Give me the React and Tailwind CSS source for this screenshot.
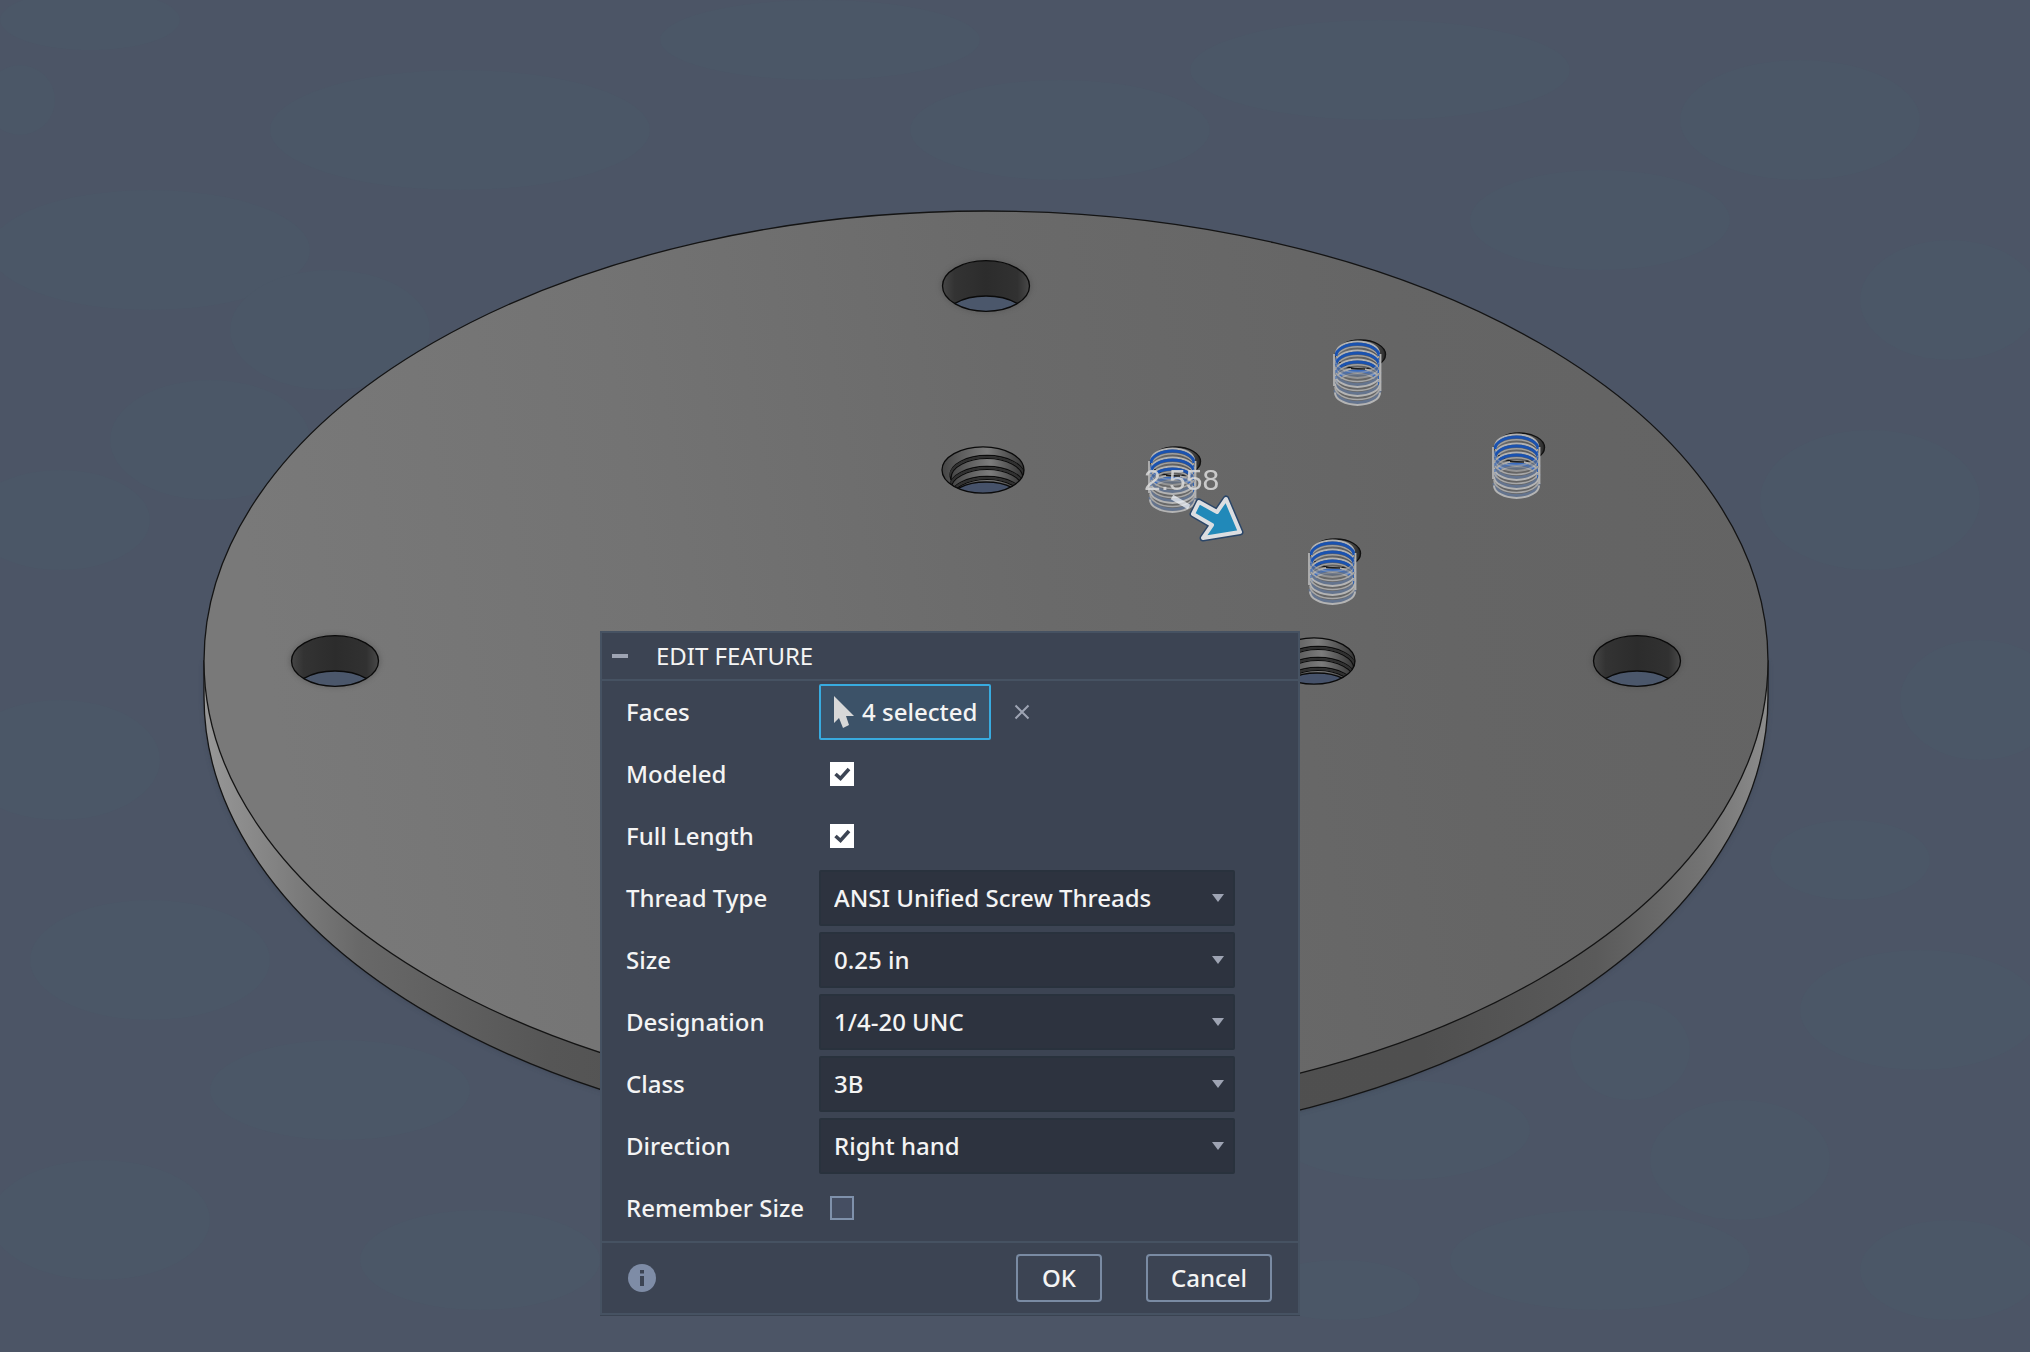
import React, { useState } from 'react';

const selects = [
  { id: 'threadType', label: 'Thread Type', options: ['ANSI Unified Screw Threads', 'ANSI Metric M Profile', 'ISO Metric Profile'] },
  { id: 'size', label: 'Size', options: ['0.25 in', '0.3125 in', '0.375 in'] },
  { id: 'designation', label: 'Designation', options: ['1/4-20 UNC', '1/4-28 UNF', '1/4-32 UNEF'] },
  { id: 'threadClass', label: 'Class', options: ['3B', '2B', '1B'] },
  { id: 'direction', label: 'Direction', options: ['Right hand', 'Left hand'] },
];

const boltHoles = [[986, 286], [335, 661], [1637, 661]];
const tappedHoles = [[983, 470], [1314, 661]];
const springs = [[1333, 341], [1148, 448], [1308, 540], [1492, 434]];

const smudges = [
  [90, 20, 90, 30], [20, 100, 35, 35], [150, 250, 160, 60], [460, 130, 190, 60], [330, 330, 100, 60],
  [210, 440, 100, 60], [60, 520, 90, 50], [820, 40, 160, 40], [1060, 130, 150, 50], [1380, 70, 190, 50],
  [1600, 220, 130, 50], [1800, 120, 120, 60], [1950, 300, 90, 60], [1870, 500, 110, 70], [1980, 700, 80, 60],
  [60, 760, 100, 60], [150, 960, 120, 60], [340, 1090, 130, 50], [100, 1220, 110, 60], [480, 1260, 120, 50],
  [1400, 1130, 130, 50], [1630, 1050, 60, 50], [1600, 1260, 150, 50], [1740, 1160, 90, 60], [1920, 1010, 120, 60],
  [1850, 860, 80, 40], [1340, 1290, 80, 30], [1950, 1270, 90, 50],
];

function BoltHole({ x, y }) {
  return (
    <g transform={`translate(${x} ${y})`}>
      <ellipse rx="46" ry="27" fill="#444" opacity="0.35" filter="url(#soft)" />
      <g clipPath="url(#boltClip)">
        <rect x="-45" y="-27" width="90" height="54" fill="url(#boltWall)" />
        <ellipse cy="35" rx="44" ry="25" fill="#4b576b" stroke="#0a0a0a" strokeWidth="1.3" />
      </g>
      <ellipse rx="43.5" ry="25.3" fill="none" stroke="#0a0a0a" strokeWidth="1.3" />
    </g>
  );
}

function TappedHole({ x, y }) {
  return (
    <g transform={`translate(${x} ${y})`}>
      <g clipPath="url(#tapClip)">
        <rect x="-42" y="-24" width="84" height="48" fill="url(#tapWall)" />
        {[5, 16, 26].map(cy => (
          <g key={cy}>
            <ellipse cx="4" cy={cy} rx="37" ry="19.5" fill="url(#tapWall)" stroke="#0c0c0c" strokeWidth="1.3" />
            <path d={`M-33 ${cy + 1.5}A37 19.5 0 0 1 41 ${cy + 1.5}`} fill="none" stroke="#303030" strokeWidth="2" />
            <ellipse cx="4" cy={cy + 3} rx="36" ry="19.5" fill="none" stroke="#0c0c0c" strokeWidth="1.2" />
          </g>
        ))}
        <ellipse cx="3" cy="31" rx="37" ry="19" fill="#46526a" stroke="#0a0a0a" strokeWidth="1.3" />
      </g>
      <ellipse rx="41" ry="23.2" fill="none" stroke="#0a0a0a" strokeWidth="1.3" />
    </g>
  );
}

function Spring({ x, y }) {
  const back = cy => `M3 ${cy}A21.5 12 0 0 1 46 ${cy}`;
  const front = cy => `M2 ${cy}A22.5 12.5 0 0 0 47 ${cy}`;
  return (
    <g transform={`translate(${x} ${y})`} fill="none">
      <ellipse cx="27.5" cy="13.5" rx="25" ry="14.5" fill="url(#pilot)" stroke="#111" strokeWidth="1.4" />
      {[15, 24, 33, 42].map((cy, i) => (
        <g key={cy}>
          <path d={back(cy - 2.6)} stroke="#b2b2b2" strokeWidth="2" />
          <path d={back(cy + 2.8)} stroke="#a0a0a0" strokeWidth="1.4" />
          <path d={back(cy)} stroke={i === 3 ? '#3a6cc0' : '#1a52b0'} strokeWidth="3" />
        </g>
      ))}
      {[22, 31, 40, 49].map((cy, i) => (
        <g key={cy} opacity={i === 0 ? 0.6 : 1}>
          <path d={front(cy)} stroke="#64748e" strokeWidth="3" />
          <path d={front(cy + 2.4)} stroke="#b4b4b4" strokeWidth="2" />
          <path d={front(cy - 3)} stroke="#a8a8a8" strokeWidth="1.6" />
        </g>
      ))}
      <path d="M18 27.500L32 28" stroke="#1b1b1b" strokeWidth="1.6" />
      <path d="M1 13V45M47.500 13V50" stroke="#b2b2b2" strokeWidth="1.8" />
      <path d="M3 17V40M45.500 17V45" stroke="#3264b4" strokeWidth="1" strokeDasharray="3 3" />
    </g>
  );
}

function Viewport() {
  return (
    <svg className="block w-full h-full" viewBox="0 0 2030 1352" preserveAspectRatio="xMidYMid slice" aria-hidden="true">
      <defs>
        <linearGradient id="face" x1="0" x2="1" y1="0.1" y2="0">
          <stop offset="0" stopColor="#797979" />
          <stop offset="0.25" stopColor="#737373" />
          <stop offset="0.5" stopColor="#6a6a6a" />
          <stop offset="0.75" stopColor="#656565" />
          <stop offset="1" stopColor="#636363" />
        </linearGradient>
        <linearGradient id="rim">
          <stop offset="0" stopColor="#989898" />
          <stop offset="0.04" stopColor="#858585" />
          <stop offset="0.1" stopColor="#686868" />
          <stop offset="0.22" stopColor="#565656" />
          <stop offset="0.35" stopColor="#505050" />
          <stop offset="0.78" stopColor="#4f4f4f" />
          <stop offset="0.89" stopColor="#5a5a5a" />
          <stop offset="0.96" stopColor="#747474" />
          <stop offset="1" stopColor="#8c8c8c" />
        </linearGradient>
        <linearGradient id="boltWall">
          <stop offset="0" stopColor="#484848" />
          <stop offset="0.15" stopColor="#333" />
          <stop offset="0.5" stopColor="#2c2c2c" />
          <stop offset="0.85" stopColor="#313131" />
          <stop offset="1" stopColor="#4c4c4c" />
        </linearGradient>
        <linearGradient id="tapWall">
          <stop offset="0" stopColor="#444" />
          <stop offset="0.2" stopColor="#5a5a5a" />
          <stop offset="0.55" stopColor="#7c7c7c" />
          <stop offset="0.85" stopColor="#4c4c4c" />
          <stop offset="1" stopColor="#333" />
        </linearGradient>
        <linearGradient id="pilot">
          <stop offset="0" stopColor="#6c6c6c" />
          <stop offset="0.7" stopColor="#5c5c5c" />
          <stop offset="1" stopColor="#2a2a2a" />
        </linearGradient>
        <clipPath id="boltClip"><ellipse rx="43.5" ry="25.3" /></clipPath>
        <clipPath id="tapClip"><ellipse rx="41" ry="23.2" /></clipPath>
        <filter id="soft" x="-20%" y="-20%" width="140%" height="140%"><feGaussianBlur stdDeviation="2.5" /></filter>
      </defs>

      <rect width="2030" height="1352" fill="#4c5566" />
      <g fill="#4b5767">
        {smudges.map(([cx, cy, rx, ry]) => <ellipse key={`${cx}-${cy}`} cx={cx} cy={cy} rx={rx} ry={ry} />)}
      </g>

      <path d="M204 662V699A782 450 0 0 0 1768 699V662Z" fill="#343c4c" opacity="0.5" filter="url(#soft)" />
      <path d="M204 661V697A782 451 0 0 0 1768 697V661Z" fill="url(#rim)" stroke="#141414" strokeWidth="1.3" />
      <ellipse cx="986" cy="661" rx="782" ry="450" fill="url(#face)" stroke="#141414" strokeWidth="1.3" />

      {boltHoles.map(([x, y]) => <BoltHole key={x} x={x} y={y} />)}
      {tappedHoles.map(([x, y]) => <TappedHole key={x} x={x} y={y} />)}
      {springs.map(([x, y]) => <Spring key={x} x={x} y={y} />)}

      {/* depth manipulator */}
      <path d="M1172 497L1189 507" stroke="#eef2f8" strokeWidth="5" opacity="0.75" />
      <g strokeLinejoin="round">
        <path d="M1199 502L1217 512L1226 499L1240 532L1203 538L1212 525L1193 514Z" fill="none" stroke="#2b4668" strokeWidth="7" />
        <path d="M1199 502L1217 512L1226 499L1240 532L1203 538L1212 525L1193 514Z" fill="#2189b9" stroke="#dcdee1" strokeWidth="4" />
      </g>
      <text x="1144" y="490" fontSize="30" fill="#dcdcdc" opacity="0.85" fontFamily="'Liberation Sans', Arial, sans-serif">2.558</text>
    </svg>
  );
}

function Row({ id, label, children }) {
  return (
    <div className="flex items-center h-[62px]">
      <label htmlFor={id} className="w-[193px] shrink-0 whitespace-nowrap">{label}</label>
      {children}
    </div>
  );
}

function Check({ id, checked, onChange }) {
  return (
    <span className="relative ml-[11px] size-6">
      <input
        id={id}
        type="checkbox"
        checked={checked}
        onChange={e => onChange(e.target.checked)}
        className="block size-6 appearance-none border-2 border-[#7f91ab] bg-[#454e62] checked:border-white checked:bg-white"
      />
      {checked && (
        <svg className="absolute inset-0 size-6 pointer-events-none" viewBox="0 0 24 24" fill="none" stroke="#3c4453" strokeWidth="3.6">
          <path d="M5.500 12L10.500 16.500L19 7" />
        </svg>
      )}
    </span>
  );
}

export default function App() {
  const [checks, setChecks] = useState({ modeled: true, fullLength: true, remember: false });
  const [values, setValues] = useState(() => Object.fromEntries(selects.map(s => [s.id, s.options[0]])));
  const toggle = key => v => setChecks(c => ({ ...c, [key]: v }));

  return (
    <main className="relative h-screen min-h-[1320px] overflow-hidden bg-[#4c5566] font-['Noto_Sans',sans-serif] text-2xl font-medium text-[#f4f4f4]">
      <Viewport />

      <section className="absolute left-[600px] top-[631px] w-[700px] bg-[#3c4453] border-2 border-[#465262] shadow-[0_1px_0_#3a4351]">
        <header className="flex items-center gap-7 h-12 pl-2.5 border-b-2 border-[#465262]">
          <button aria-label="Collapse" className="flex items-center h-6">
            <span className="block w-4 h-1 bg-[#9ea4b3]" />
          </button>
          <h1 className="font-normal">EDIT FEATURE</h1>
        </header>

        <form onSubmit={e => e.preventDefault()}>
          <div className="pl-6 pb-0.5">
            <Row id="faces" label="Faces">
              <button id="faces" type="button" className="flex items-center gap-2 h-14 w-[172px] pl-3 rounded-xs border-2 border-[#38abdf] bg-[#3c5268] whitespace-nowrap">
                <svg className="w-[21px] h-8 shrink-0" viewBox="0 0 21 32" fill="#d8d8d8">
                  <path d="M1 0L21 20H13L16 29L10 32L6 22L1 27Z" />
                </svg>
                4 selected
              </button>
              <button type="button" aria-label="Clear faces" className="ml-[23px]">
                <svg className="size-4" viewBox="0 0 16 16" stroke="#9ea4b3" strokeWidth="2">
                  <path d="M1.500 1.500L14.500 14.500M14.500 1.500L1.500 14.500" />
                </svg>
              </button>
            </Row>
            <Row id="modeled" label="Modeled">
              <Check id="modeled" checked={checks.modeled} onChange={toggle('modeled')} />
            </Row>
            <Row id="fullLength" label="Full Length">
              <Check id="fullLength" checked={checks.fullLength} onChange={toggle('fullLength')} />
            </Row>
            {selects.map(s => (
              <Row key={s.id} id={s.id} label={s.label}>
                <div className="relative w-[416px]">
                  <select
                    id={s.id}
                    value={values[s.id]}
                    onChange={e => setValues(v => ({ ...v, [s.id]: e.target.value }))}
                    className="block w-full h-14 pl-[13px] pr-10 appearance-none rounded-xs border-2 border-[#29323d] bg-[#2d333f]"
                  >
                    {s.options.map(o => <option key={o}>{o}</option>)}
                  </select>
                  <svg className="absolute right-[11px] top-6 w-3 h-2 pointer-events-none" viewBox="0 0 12 8" fill="#9ea4b3">
                    <path d="M0 0H12L6 8Z" />
                  </svg>
                </div>
              </Row>
            ))}
            <Row id="remember" label="Remember Size">
              <Check id="remember" checked={checks.remember} onChange={toggle('remember')} />
            </Row>
          </div>

          <footer className="flex items-center h-[72px] px-[26px] border-t-2 border-[#465262]">
            <button type="button" aria-label="Info" className="mr-auto">
              <svg className="size-7" viewBox="0 0 28 28">
                <circle cx="14" cy="14" r="14" fill="#7e8ca6" />
                <path d="M12 6H16V9.500H12ZM12 12H16V22H12Z" fill="#3c4453" />
              </svg>
            </button>
            <button type="submit" className="h-12 w-[86px] rounded-sm border-2 border-[#7a8ba3]">OK</button>
            <button type="button" className="h-12 w-[126px] ml-11 rounded-sm border-2 border-[#7a8ba3]">Cancel</button>
          </footer>
        </form>
      </section>
    </main>
  );
}
